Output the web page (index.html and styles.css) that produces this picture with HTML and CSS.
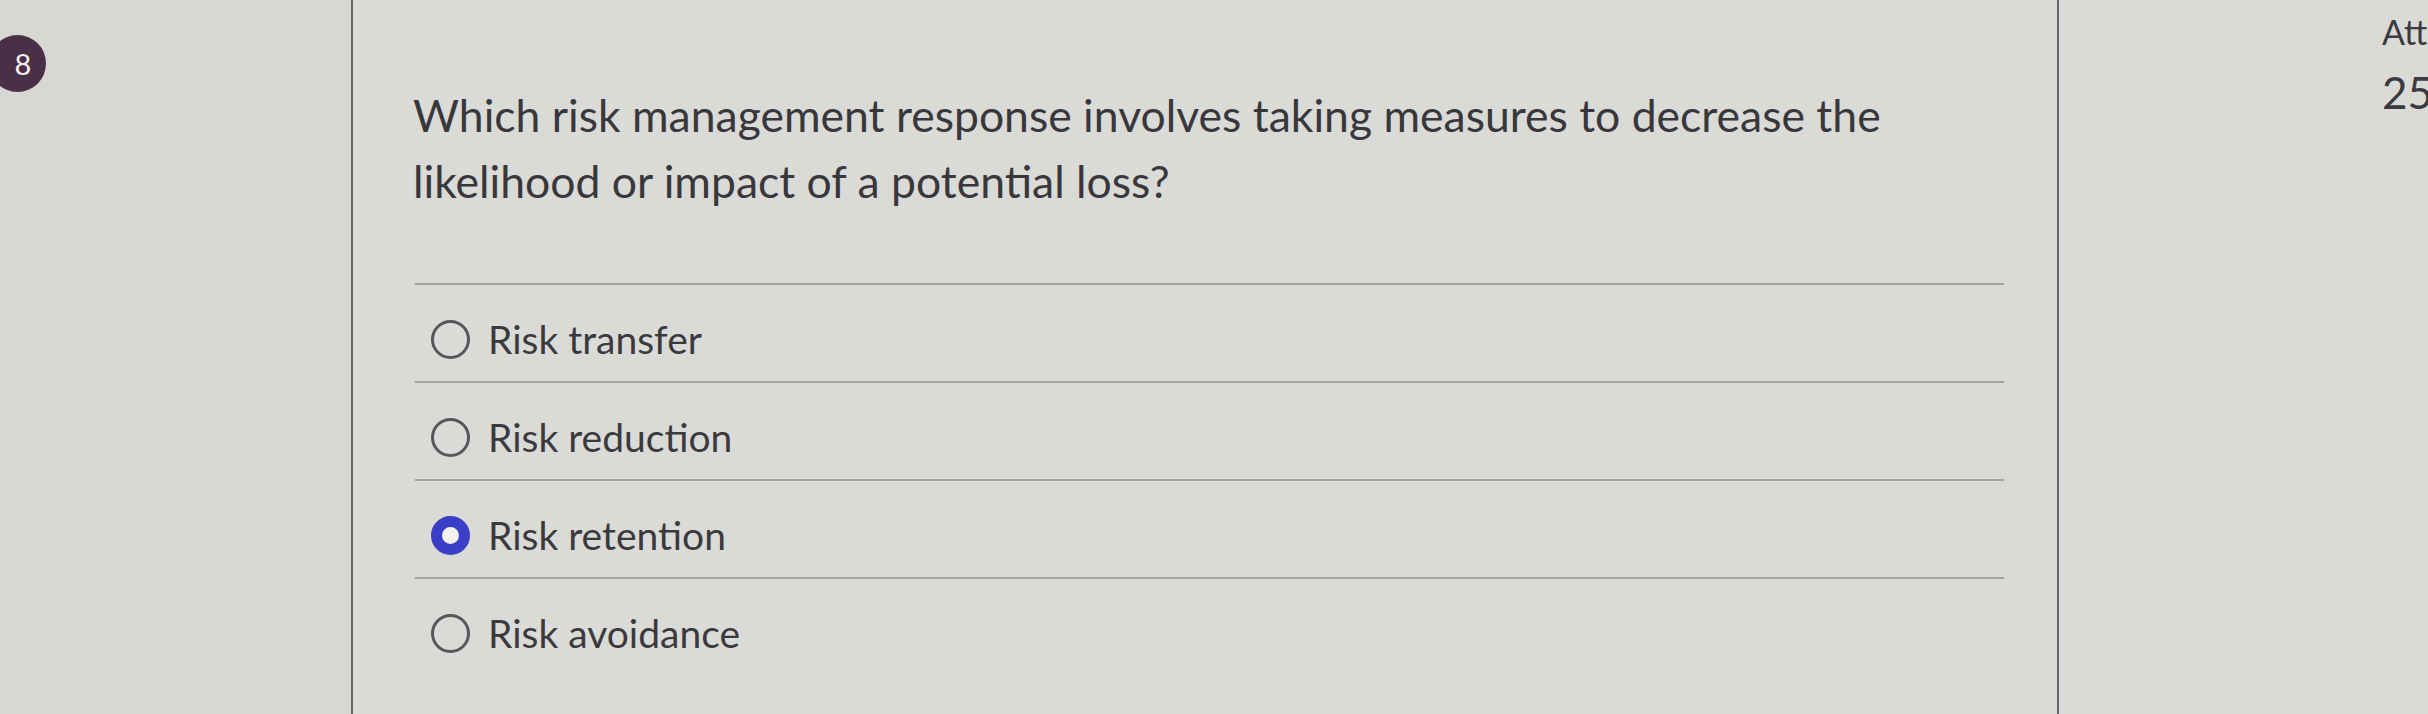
FILE: index.html
```html
<!DOCTYPE html>
<html lang="en">
<head>
<meta charset="utf-8">
<title>Quiz question 8</title>
<link rel="stylesheet" href="styles.css">
</head>
<body>
<div class="page">
  <aside class="side">
    <div class="badge">8</div>
  </aside>
  <main class="main">
    <div class="question">Which risk management response involves taking measures to decrease the likelihood or impact of a potential loss?</div>
    <div class="options">
      <label class="option">
        <span class="radio"></span>
        <span class="opt-text">Risk transfer</span>
      </label>
      <label class="option">
        <span class="radio"></span>
        <span class="opt-text">Risk reduction</span>
      </label>
      <label class="option">
        <span class="radio selected"></span>
        <span class="opt-text">Risk retention</span>
      </label>
      <label class="option">
        <span class="radio"></span>
        <span class="opt-text">Risk avoidance</span>
      </label>
    </div>
  </main>
  <aside class="info">
    <div class="info-label">Attempt</div>
    <div class="info-value">25</div>
  </aside>
</div>
</body>
</html>
```
FILE: styles.css
```css
html, body {
  margin: 0;
  padding: 0;
  width: 2428px;
  height: 714px;
  overflow: hidden;
  background: #dadad6;
  font-family: Lato, "Open Sans", "Liberation Sans", sans-serif;
  color: #3b3b3f;
}

.page {
  display: flex;
  width: 2428px;
  height: 714px;
}

.side {
  width: 351px;
  flex: 0 0 351px;
  border-right: 2px solid #66666a;
  background: #d7d7d3;
}

.badge {
  width: 57px;
  height: 57px;
  margin-top: 35px;
  margin-left: -11px;
  border-radius: 50%;
  background: #4a3046;
  color: #f4f0f2;
  font-size: 29px;
  line-height: 57px;
  text-align: center;
  text-indent: 11px;
}

.main {
  width: 1706px;
  flex: 0 0 1706px;
  border-right: 2px solid #66666a;
  padding-left: 60px;
  box-sizing: border-box;
}

.question {
  padding-top: 82px;
  max-width: 1600px;
  font-size: 44.5px;
  line-height: 66px;
  color: #38383c;
  margin-bottom: 69px;
}

.options {
  width: 1589px;
  margin-left: 2px;
}

.option {
  display: flex;
  align-items: center;
  height: 98px;
  box-sizing: border-box;
  border-top: 2px solid #a2a29f;
  padding-top: 12px;
  padding-left: 16px;
}

.radio {
  width: 39px;
  height: 39px;
  box-sizing: border-box;
  border: 3px solid #57575a;
  border-radius: 50%;
  flex: 0 0 39px;
}

.radio.selected {
  border: 11px solid #3b3ec6;
  background: #f2f2f0;
}

.opt-text {
  margin-left: 18px;
  font-size: 39px;
  color: #3a3a3e;
}

.info {
  flex: 1 1 auto;
  padding-left: 323px;
  padding-top: 12px;
  overflow: hidden;
  white-space: nowrap;
}

.info-label {
  font-size: 34px;
  line-height: 40px;
}

.info-value {
  margin-top: 13px;
  font-size: 44px;
  line-height: 55px;
}
```
